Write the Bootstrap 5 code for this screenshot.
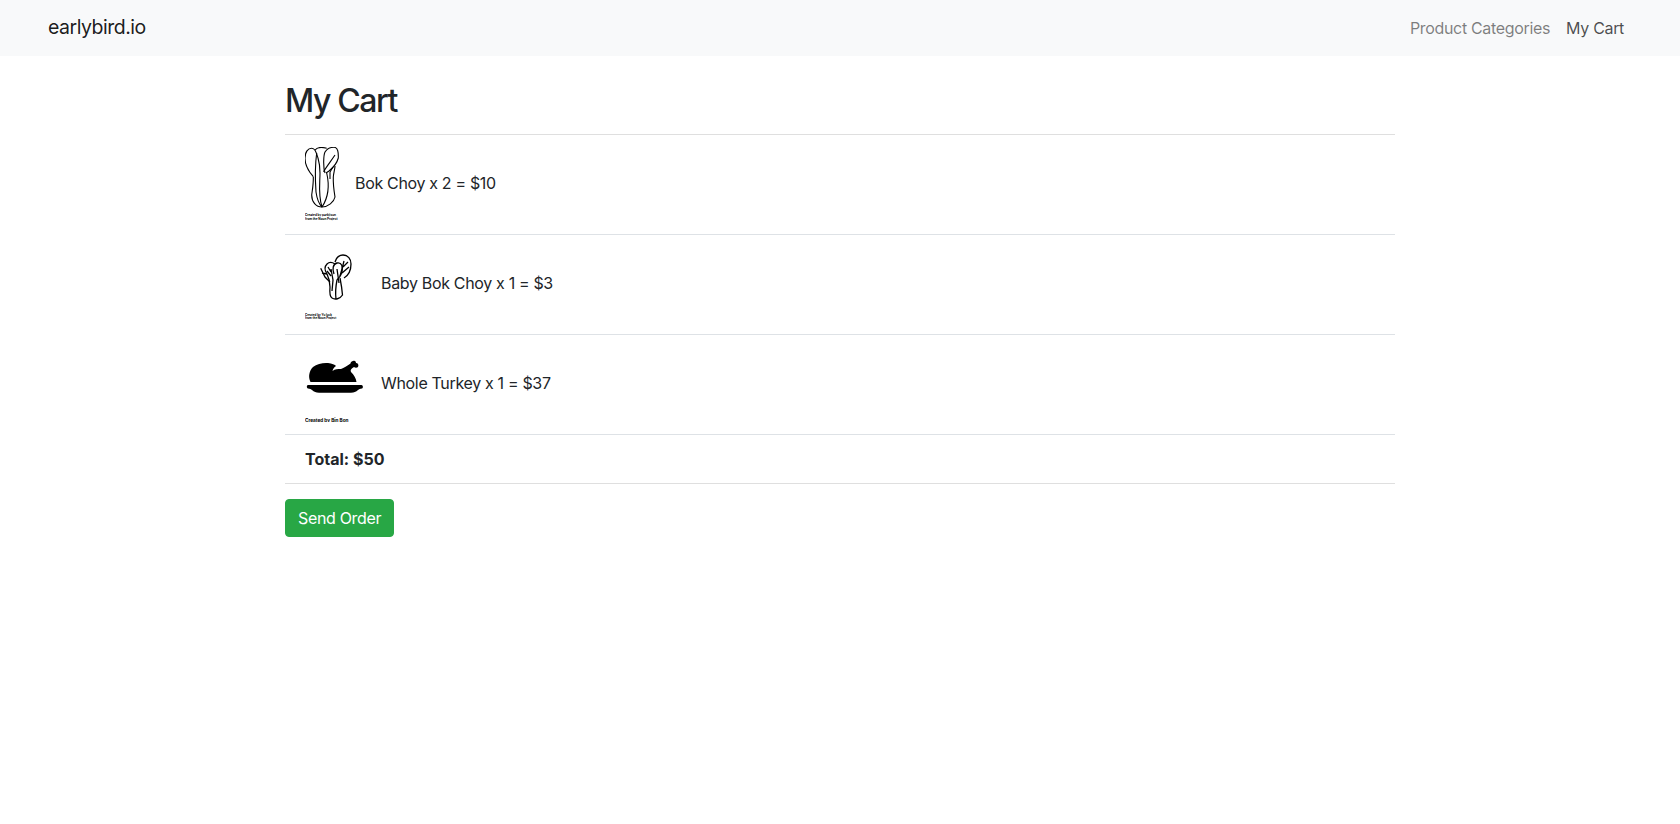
<!DOCTYPE html>
<html lang="en">

<head>
    <meta charset="utf-8">
    <meta name="viewport" content="width=device-width, initial-scale=1.0">
    <title>earlybird.io</title>
    <link href="https://cdn.jsdelivr.net/npm/bootstrap@5.3.0/dist/css/bootstrap.min.css" rel="stylesheet">
    <style>
        body { font-family: Inter, "Liberation Sans", sans-serif; color: #212529; letter-spacing: -.33px; }
        .top-bar { height: 56px; padding: 8px 48px; }
        .top-bar .navbar-brand { font-size: 19.5px; margin: 0; color: rgba(0, 0, 0, .9); letter-spacing: -.5px; }
        .top-bar .nav-link { color: rgba(0, 0, 0, .5); padding: 8px; }
        .top-bar .nav-link.active { color: rgba(0, 0, 0, .7); }
        .cart-wrap { max-width: 1110px; margin: 0 auto; padding-top: 26px; }
        .cart-title { font-size: 32px; font-weight: 500; line-height: 1.2; margin-bottom: 14px; letter-spacing: -1.4px; }
        .cart-list { border-bottom: 1px solid rgba(0, 0, 0, .125); border-top: 1px solid rgba(0, 0, 0, .125); }
        .cart-list .list-group-item { padding: 12px 20px; display: flex; align-items: center; gap: 12px; }
        .cart-list .list-group-item > span { padding-bottom: 4px; }
        .cart-total { letter-spacing: 0; }
        .cart-pic { height: 75px; display: block; flex: none; letter-spacing: 0; }
        .pic-credit { font-family: Inter, sans-serif; font-weight: 700; fill: #000; stroke: none; }
        .credit-bok { font-size: 3.05px; }
        .credit-baby { font-size: 2.95px; }
        .credit-turkey { font-size: 4.7px; }
        .send-btn { background: #28a745; border-color: #28a745; border-radius: 4px; margin-top: 15px; padding: 6px 12px; letter-spacing: -.33px; }
    </style>
</head>

<body>
<nav class="navbar navbar-expand-md bg-light top-bar">
    <a class="navbar-brand" href="#">earlybird.io</a>
    <div class="navbar-nav ms-auto flex-row">
        <a class="nav-link" href="#">Product Categories</a>
        <a class="nav-link active" href="#">My Cart</a>
    </div>
</nav>

<div class="cart-wrap">
    <h1 class="cart-title">My Cart</h1>
    <ul class="list-group list-group-flush cart-list">
        <li class="list-group-item">
            <svg class="cart-pic" width="38" height="75" viewBox="0 0 38 75" fill="none" stroke="#000" stroke-width="1.1">
                <path d="M8.3 29.7C5 26 0 20 0 11.3C0 5 3 1.3 6.7 1.3C10 1.3 11 5 13 11C14.5 16 15 22 15 26"/>
                <path d="M10 3C12 .5 17 0 21.7 1.3"/>
                <path d="M20 26C18 20 18.5 8 20 5C22 2 26 .3 29 .3C33 .3 33.5 6 33.3 11C32 16 29 20 24 24L21 26"/>
                <path d="M8.3 29.7C8.5 37 7.5 42 6.7 48C6.7 55 11 60 17 60C23 60 29 55 30 50C29 44 28 38 28.3 30C28.5 26 30 22 30 19"/>
                <path d="M11.7 6C10 18 10 30 11 45C12 52 14 57 17 60"/>
                <path d="M15 26C15 36 13 48 17 60M21.7 26C24 36 25 48 17 60"/>
                <path d="M30 8C26 14 22 19 18.5 24.7M25 25L25 32M28 20L25 25"/>
                <text class="pic-credit credit-bok" x="0" y="69">Created by parkjisun</text>
                <text class="pic-credit credit-bok" x="0" y="73">from the Noun Project</text>
            </svg>
            <span>Bok Choy x 2 = $10</span>
        </li>
        <li class="list-group-item">
            <svg class="cart-pic" width="64" height="75" viewBox="0 0 64 75" fill="none" stroke="#000" stroke-width="1.3">
                <path d="M30 15C31 10 35 8 38 8C43 8 46 12 46 17C46 23 44 28 39 31"/>
                <path d="M30 17C27 15 24 15 22 17C19 20 20 24 22 27"/>
                <path d="M15.7 21.3L20 30L25 35M17 26L22 27"/>
                <path d="M22 27C24 31 25 34 25 40C24.5 46 25 50 27 51C30 53 35 52 37.5 48C37 42 36 36 35 31"/>
                <path d="M29 27C27 22 28 17 32 16C37 15 38 20 37 25C36 29 34 31 32 33C31 38 30 44 31 52"/>
                <path d="M26 22L28 33L27 44M32 22L34 36M39 14L37 22L35 29M43 15L38 20M44 20L37 26M23 20L26 25M22 24L26 29"/>
                <text class="pic-credit credit-baby" x="0" y="69">Created by Yu luck</text>
                <text class="pic-credit credit-baby" x="0" y="72">from the Noun Project</text>
            </svg>
            <span>Baby Bok Choy x 1 = $3</span>
        </li>
        <li class="list-group-item">
            <svg class="cart-pic" width="64" height="75" viewBox="0 0 64 75">
                <path d="M5.5 35C3 30 4 24 8 20C12 17 18 15.5 23 16C27 16.5 30 17.5 31 19C29 20 28 22 27.5 24C30 22 33 22 36 22C39 21 42 19 45.5 16.5C45.5 15 47 14 48 14C50 13 51 14.5 51 16C53 16 54 18 53 20C52 21 50 21 49 20C46 22 45 23 46 25C49 28 51 31 51.5 35Z"/>
                <path d="M3 38H56.5C58 38 58.5 41 57 41.5C55 42 54 42 53 43C51 45 49 45.7 46 45.7H14C11 45.7 9 45 7 43C6 42 5 42 3 41.5C1.5 41 1.5 38 3 38Z"/>
                <text class="pic-credit credit-turkey" x="0" y="74.5">Created by Bin Bon</text>
            </svg>
            <span>Whole Turkey x 1 = $37</span>
        </li>
        <li class="list-group-item fw-bold cart-total">Total: $50</li>
    </ul>
    <button type="button" class="btn btn-success send-btn">Send Order</button>
</div>

</body>

</html>
